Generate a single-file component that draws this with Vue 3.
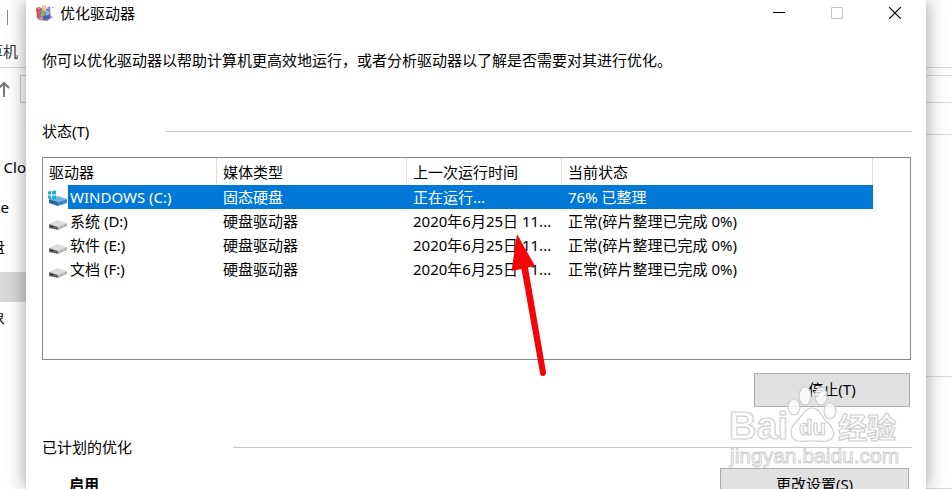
<script setup>
const drives = [
  { name: 'WINDOWS (C:)', type: '固态硬盘', last: '正在运行...', state: '76% 已整理', active: true },
  { name: '系统 (D:)', type: '硬盘驱动器', last: '2020年6月25日 11...', state: '正常(碎片整理已完成 0%)' },
  { name: '软件 (E:)', type: '硬盘驱动器', last: '2020年6月25日 11...', state: '正常(碎片整理已完成 0%)' },
  { name: '文档 (F:)', type: '硬盘驱动器', last: '2020年6月25日 11...', state: '正常(碎片整理已完成 0%)' },
]
</script>

<template>
  <div class="desktop">
    <aside class="behind left">
      <div class="tab-top"><i></i></div>
      <div class="ribbon">计算机</div>
      <div class="address">
        <svg width="12" height="16" viewBox="0 0 12 16"><path d="M6 16V2M1 7l5-5 5 5" fill="none" stroke="#777" stroke-width="2" /></svg>
        <span></span>
      </div>
      <nav class="tree">
        <div class="node cloud">e Clo</div>
        <div class="node e">e</div>
        <div class="node disk">盘</div>
        <div class="node current"></div>
        <div class="node obj">象</div>
      </nav>
    </aside>

    <main class="dialog">
      <header class="titlebar">
        <svg class="app-icon" width="20" height="20" viewBox="0 0 20 20">
          <path d="M1 5l4-1v13l-3-2z" fill="#c4454f" />
          <path d="M1 5l3-1 3 1-2 2z" fill="#ef8c65" />
          <path d="M5 5l10 1 1 9-4 3-8-1z" fill="#8a6cae" />
          <path d="M7 3l4-1v7l-4 1z" fill="#f1c795" />
          <path d="M2 8l4-1v5l-3 1z" fill="#e0566a" />
          <path d="M6 8l4-1v6l-4 1z" fill="#6fbd62" />
          <path d="M11 7l3 1v5l-3 1z" fill="#8db9ec" />
          <path d="M4 14l4 0v3l-4-1z" fill="#e08a80" />
          <path d="M8 13l7-1v3l-6 2z" fill="#3f62ae" />
          <path d="M14 3l1 1 1 1-1 1-1 1-1-1-1-1 1-1z" fill="#a884ee" />
          <path d="M17 13l1 1-1 1-1-1zM17 4h1v1h-1z" fill="#8d67dc" />
        </svg>
        <h1>优化驱动器</h1>
        <div class="window-controls">
          <button aria-label="最小化"><svg width="12" height="12" viewBox="0 0 12 12"><path d="M0 5.500h12" stroke="#000" /></svg></button>
          <button aria-label="最大化" disabled><svg width="12" height="12" viewBox="0 0 12 12"><path d="M.5.5h11v11H.5z" fill="none" stroke="#c6c6c6" /></svg></button>
          <button aria-label="关闭"><svg width="12" height="12" viewBox="0 0 12 12"><path d="M0 0l12 12M12 0L0 12" stroke="#000" stroke-width="1.200" /></svg></button>
        </div>
      </header>

      <div class="content">
        <p class="intro">你可以优化驱动器以帮助计算机更高效地运行，或者分析驱动器以了解是否需要对其进行优化。</p>
        <h2 class="section status">状态(T)</h2>
        <div class="list">
          <table>
            <colgroup><col class="c-name" /><col class="c-type" /><col class="c-last" /><col class="c-state" /></colgroup>
            <thead>
              <tr><th>驱动器</th><th>媒体类型</th><th>上一次运行时间</th><th>当前状态</th></tr>
            </thead>
            <tbody>
              <tr v-for="d in drives" :key="d.name" :class="{ selected: d.active }">
                <td class="name">
                  <div class="drive">
                    <svg width="20" height="18" viewBox="0 0 20 18">
                      <g v-if="d.active">
                        <path d="M1 9l9-3 9 3-9 3z" fill="#72b5e5" />
                        <path d="M1 9l9 3v4l-9-3z" fill="#24669d" />
                        <path d="M10 12l9-3v4l-9 3z" fill="#3c87c5" />
                        <path d="M0 1.500l3-.4V4.500H0zM4 1L8 .5v4H4zM0 5.500h3v3.400L0 8.500zM4 5.500h4v4l-4-.5z" fill="#1aaed0" />
                      </g>
                      <g v-else>
                        <path d="M1 10l8-4 10 3-9 4z" fill="#dedede" />
                        <path d="M1 10l9 3v3l-9-2z" fill="#666" />
                        <path d="M10 13l9-4v3l-9 4z" fill="#b4b4b4" />
                        <path d="M2 12l4 1" stroke="#222" />
                      </g>
                    </svg>
                    <span>{{ d.name }}</span>
                  </div>
                </td>
                <td>{{ d.type }}</td>
                <td>{{ d.last }}</td>
                <td>{{ d.state }}</td>
              </tr>
            </tbody>
          </table>
        </div>
        <div class="actions"><button class="push stop">停止(T)</button></div>
        <h2 class="section planned">已计划的优化</h2>
        <div class="schedule"><strong>启用</strong><button class="push change">更改设置(S)</button></div>
      </div>

      <svg class="pointer" width="40" height="146" viewBox="0 0 40 146" aria-hidden="true">
        <path d="M7 0L25 32l-7 1.500L36 138q0 4-3 4t-3-3L11.500 35l-10 2z" fill="#f40606" />
      </svg>
      <svg class="watermark" width="180" height="86" viewBox="0 0 180 86" aria-hidden="true">
        <g fill="#fff" fill-opacity=".8" stroke="#cfcfcf" stroke-width="1.200">
          <text x="3" y="53" class="wm-logo">Bai</text>
          <ellipse cx="68" cy="21" rx="6" ry="8" />
          <ellipse cx="79" cy="10" rx="6" ry="9" />
          <ellipse cx="95" cy="10" rx="6" ry="9" />
          <ellipse cx="104" cy="25" rx="6" ry="8" />
          <path d="M86 22c-8 0-9 8-15 13-6 5-7 10-5 16 3 6 10 4 20 4s18 2 21-4c2-6-1-11-7-16-5-5-6-13-14-13z" />
          <text x="73" y="49" class="wm-du">du</text>
          <text x="112" y="53" class="wm-cn">经验</text>
          <text x="4" y="77" class="wm-url">jingyan.baidu.com</text>
        </g>
      </svg>
    </main>

    <aside class="behind right"><i class="r1"></i><i class="r2"></i><i class="r3"></i><i class="r4"></i><i class="r5"></i><i class="r6"></i></aside>
  </div>
</template>

<style>
html, body { margin: 0; overflow: hidden; }
</style>

<style scoped>
* { box-sizing: border-box; }
.desktop {
  display: flex;
  height: 100vh;
  overflow: hidden;
  background: #fff;
  color: #000;
  font: 15px/24px "Noto Sans", "Noto Sans CJK SC", sans-serif;
}
.behind { flex: 0 0 26px; overflow: hidden; }
.tab-top { height: 39px; padding: 10px 7px; }
.tab-top i { display: block; width: 1px; height: 15px; background: #888; }
.ribbon { display: flex; justify-content: flex-end; height: 29px; padding-right: 8px; border-bottom: 1px solid #d5d5d5; white-space: nowrap; color: #333; }
.address { display: flex; align-items: center; justify-content: space-between; height: 42px; }
.address svg { margin-left: -2px; }
.address span { width: 6px; height: 28px; border: 1px solid #ccc; border-right: 0; }
.tree { padding-top: 37px; }
.node { display: flex; justify-content: flex-end; align-items: center; height: 40px; white-space: nowrap; }
.e { padding-right: 17px; }
.disk { padding-right: 21px; }
.current { height: 30px; margin-top: 5px; background: #d8d8d8; }
.obj { padding-right: 21px; height: 30px; }

.dialog { position: relative; flex: 1; min-width: 0; background: #fff; box-shadow: 0 0 18px rgba(0, 0, 0, .4); }
.titlebar { display: flex; align-items: center; height: 26px; padding-left: 9px; }
.titlebar h1 { margin: 0 0 0 5px; font-size: 15px; font-weight: 400; }
.window-controls { display: flex; margin-left: auto; padding-right: 2px; }
.window-controls button { display: grid; place-items: center; width: 58px; height: 26px; padding: 0; border: 0; background: transparent; }
.content { padding: 22px 14px 0 16px; }
.intro { margin: 0; white-space: nowrap; }
.section { display: flex; align-items: center; margin: 0; font-size: 15px; font-weight: 400; white-space: nowrap; }
.section::after { content: ""; flex: 1; height: 1px; background: #c8c8c8; }
.status { margin-top: 47px; }
.status::after { margin-left: 77px; }
.list { height: 203px; margin-top: 14px; margin-right: 1px; border: 1px solid #828790; overflow: hidden; }
table { width: 830px; border-collapse: separate; border-spacing: 0; table-layout: fixed; }
.c-name { width: 174px; }
.c-type { width: 190px; }
.c-last { width: 155px; }
.c-state { width: 311px; }
th, td { height: 24px; padding: 0 0 0 6px; font-weight: 400; line-height: 24px; text-align: left; white-space: nowrap; }
th { height: 27px; padding-top: 1px; border-right: 1px solid #e0e0e0; }
td.name { padding: 0; }
.drive { display: flex; padding-left: 5px; background: #fff; }
.drive svg { flex: none; margin-top: 5px; }
.drive span { flex: 1; padding-left: 2px; }
.selected td, .selected .drive span { background: #0078d7; color: #fff; }
.actions { display: flex; justify-content: flex-end; margin-top: 13px; padding-right: 2px; }
.push { padding: 0 0 2px; border: 1px solid #adadad; background: #e1e1e1; color: #000; font: inherit; }
.stop { width: 156px; height: 34px; }
.planned { margin-top: 28px; }
.planned::after { margin-left: 101px; }
.schedule { display: flex; align-items: flex-start; justify-content: space-between; margin-top: 9px; padding: 0 3px 0 27px; }
.schedule strong { margin-top: 4px; }
.change { width: 189px; height: 34px; }
.pointer { position: absolute; left: 484px; top: 234px; }
.watermark { position: absolute; right: 20px; top: 386px; overflow: visible; }
.watermark text { font-family: "Liberation Sans", "Noto Sans CJK SC", sans-serif; }
.watermark .wm-logo { font-size: 38px; font-weight: 700; }
.watermark .wm-du { font-size: 22px; font-weight: 700; }
.watermark .wm-cn { font-size: 29px; font-weight: 700; }
.watermark .wm-url { font-size: 21px; stroke-width: 1px; }

.right i { display: block; border-top: 1px solid #d8d8d8; }
.right .r1 { margin-top: 67px; }
.right .r2 { margin-top: 7px; }
.right .r3 { margin-top: 26px; }
.right .r4 { margin-top: 31px; }
.right .r5 { margin-top: 241px; }
.right .r6 { margin-top: 111px; }
</style>
